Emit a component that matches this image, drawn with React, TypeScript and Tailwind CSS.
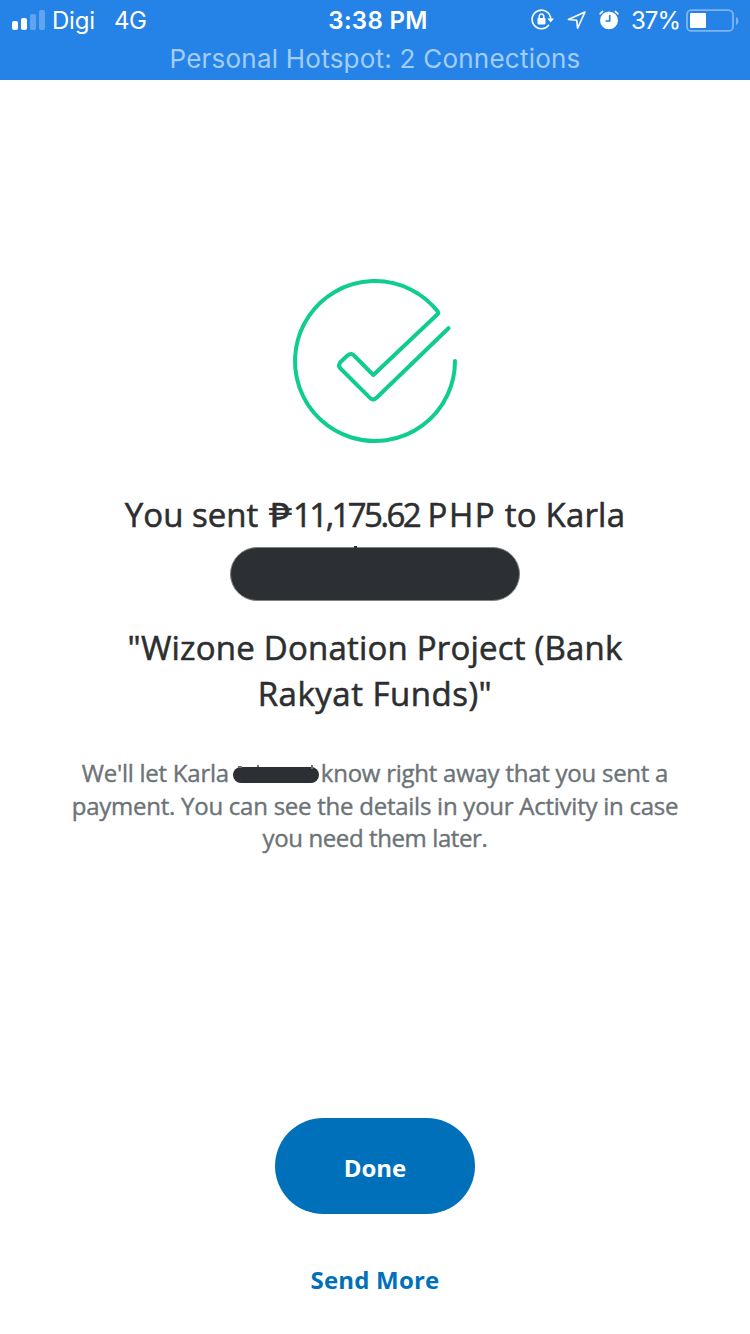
import type { ReactNode } from 'react';

function SignalBars() {
  return (
    <svg className="mb-px" width="34" height="20" viewBox="0 0 34 20" fill="#fff">
      <rect x="0" y="11" width="6" height="9" rx="2" />
      <rect x="9" y="8" width="6" height="12" rx="2" />
      <rect x="18" y="4" width="6" height="16" rx="2" opacity="0.27" />
      <rect x="27" y="0" width="6" height="20" rx="2" opacity="0.27" />
    </svg>
  );
}

function RotationLock() {
  return (
    <svg width="24" height="22" viewBox="0 0 24 22" fill="none" stroke="#fff" strokeWidth="1.6">
      <path d="M19.7 10A9.300 9.300 0 1 0 18 15.800" />
      <path d="M16.300 9.500H23L19.600 13.500Z" fill="#fff" stroke="none" />
      <rect x="6.500" y="9" width="8" height="6.400" rx="0.800" fill="#fff" stroke="none" />
      <path d="M8.200 9.500V7.300a2.300 2.300 0 0 1 4.600 0V9.500" strokeWidth="1.500" />
    </svg>
  );
}

function LocationArrow() {
  return (
    <svg width="20" height="20" viewBox="0 0 20 20" fill="none" stroke="#fff" strokeWidth="1.600" strokeLinejoin="round">
      <path d="M18 2 1.400 9.500l8.300.7.900 7.900z" />
    </svg>
  );
}

function AlarmClock() {
  return (
    <svg width="20" height="20" viewBox="0 0 20 20" fill="none" stroke="#fff">
      <circle cx="10" cy="10.400" r="8.900" fill="#fff" stroke="none" />
      <path d="M1.200 3.800A10 10 0 0 1 3.600 1.500M18.800 3.800A10 10 0 0 0 16.400 1.500" strokeWidth="1.700" strokeLinecap="round" />
      <path d="M10.700 5v6H6.500" stroke="#2583e8" strokeWidth="1.600" />
    </svg>
  );
}

function Battery() {
  return (
    <svg width="53" height="24" viewBox="0 0 53 24" fill="none">
      <rect x="1" y="1.100" width="46" height="20.800" rx="4.500" stroke="#7eb5f1" strokeWidth="1.800" />
      <path d="M50 8v8c1.600-.8 2.400-2.200 2.400-4S51.600 8.800 50 8z" fill="#7eb5f1" />
      <rect x="4" y="4" width="16" height="15" rx="1" fill="#fff" />
    </svg>
  );
}

function StatusBar() {
  return (
    <header className="h-20 bg-[#2583e8] font-['Inter',sans-serif] text-white">
      <div className="grid h-[41px] grid-cols-3 items-center text-[24px] leading-none">
        <div className="flex items-center pl-3">
          <SignalBars />
          <span className="ml-[6px] tracking-[-0.2px]">Digi</span>
          <span className="ml-[19px] tracking-[-0.5px]">4G</span>
        </div>
        <div className="pl-1.5 text-center font-semibold tracking-[0.3px]">3:38 PM</div>
        <div className="flex items-center justify-end pr-[11px]">
          <span className="mb-0.5 flex items-center gap-3">
            <RotationLock />
            <LocationArrow />
            <AlarmClock />
          </span>
          <span className="ml-3 tracking-[-1px]">37%</span>
          <span className="ml-1.5 flex"><Battery /></span>
        </div>
      </div>
      <div className="flex h-9 items-center justify-center text-[26px] leading-none tracking-[0.23px] text-[#a3cdf8]">
        Personal Hotspot: 2 Connections
      </div>
    </header>
  );
}

function SuccessMark() {
  return (
    <svg
      className="overflow-visible"
      width="164"
      height="164"
      viewBox="0 0 164 164"
      fill="none"
      stroke="#10cc90"
      strokeWidth="4"
      strokeLinecap="round"
      strokeLinejoin="round"
    >
      <path d="M162 82A80 80 0 1 1 144.800 32.500Q145.800 34 144.500 35.200L80.300 96 62 77.500Q58.500 73 54.500 76.500L47.500 83Q44.500 86.500 47.500 89.500L77 118.800Q80.300 122 83.600 118.800L155.500 49.200" />
    </svg>
  );
}

function Line({ className = '', children }: { className?: string; children: ReactNode }) {
  return <span className={`block whitespace-nowrap ${className}`}>{children}</span>;
}

export default function App() {
  return (
    <div className="flex h-[1334px] w-[750px] flex-col overflow-hidden bg-white font-['Open_Sans','Noto_Sans',sans-serif]">
      <StatusBar />

      <main className="flex flex-1 flex-col items-center pt-[199px] text-center">
        <SuccessMark />

        <h1 className="mt-[49px] text-[33px] leading-[46px] text-[#2c2e2f] [-webkit-text-stroke:0.55px_#2c2e2f]">
          <Line>
            You sent
            <span className="mr-[3px] ml-[13px] inline-block scale-x-[1.2]">₱</span>
            <span className="tracking-[-2.6px]">11,175.62</span>{' '}
            <span className="tracking-[1.5px]">PHP</span> <span className="tracking-[0.2px]">to Karla</span>
          </Line>
          <span className="relative mx-auto mt-[9px] block h-[54px] w-[290px] rounded-full border border-[#7c8386] bg-[#2c3034]">
            <span className="absolute -top-[2px] left-[123px] h-[2px] w-[3px] bg-[#2c2e2f]" />
          </span>
          <Line className="mt-[24px] tracking-[0.2px]">"Wizone Donation Project (Bank</Line>
          <Line className="tracking-[0.5px]">Rakyat Funds)"</Line>
        </h1>

        <p className="mt-[40px] text-[24px] leading-[32.500px] text-[#6c7378] [-webkit-text-stroke:0.4px_#6c7378]">
          <Line className="flex items-center justify-center tracking-[-0.25px]">
            We'll let Karla
            <span className="relative top-[1.5px] mr-0.5 ml-1 inline-block h-4 w-[86px] rounded-full bg-[#2c3034]">
              <span className="absolute -top-px left-[5px] h-0.5 w-1 bg-[#6c7378]" />
              <span className="absolute -top-0.5 left-[24px] h-0.5 w-0.5 bg-[#6c7378]" />
              <span className="absolute -top-0.5 left-[78px] h-1 w-0.5 bg-[#6c7378]" />
            </span>
            know right away that you sent a
          </Line>
          <Line className="tracking-[-0.25px]">payment. You can see the details in your Activity in case</Line>
          <Line className="tracking-[-0.4px]">you need them later.</Line>
        </p>

        <button className="mt-[263px] h-24 w-[200px] rounded-full bg-[#0070ba] pt-1 text-[24px] font-bold text-white">Done</button>
        <button className="mt-[46px] text-[24px] leading-[40px] font-bold tracking-[0.2px] text-[#0070ba]">Send More</button>
      </main>
    </div>
  );
}
